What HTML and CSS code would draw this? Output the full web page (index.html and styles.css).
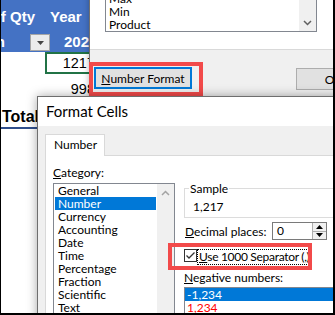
FILE: index.html
```html
<!DOCTYPE html>
<html>
<head>
<meta charset="utf-8">
<link rel="stylesheet" href="styles.css">
</head>
<body>
<div class="frame">
  <div class="sheet">
    <div class="hdr">
      <div class="hrow r1">
        <div class="clip c1"><span>Sum of Qty</span></div>
        <div class="c2">Year</div>
      </div>
      <div class="hrow r2">
        <div class="clip c0"><span>Column</span></div>
        <div class="dd"><svg width="7" height="4" viewBox="0 0 7 4"><polygon points="0,0 7,0 3.5,4" fill="#444"/></svg></div>
        <div class="c3">2020</div>
      </div>
    </div>
    <div class="cell sel"><span>1217</span></div>
    <div class="cell plain"><span>998</span></div>
    <div class="total">Total</div>
  </div>

  <div class="win back">
    <div class="panel">
      <div class="lb">
        <div class="items bottom">
          <div class="it">Max</div>
          <div class="it">Min</div>
          <div class="it">Product</div>
        </div>
        <div class="sbar bottom">
          <div class="arr"><svg width="9" height="6" viewBox="0 0 9 6"><polyline points="1,1 4.5,4.5 8,1" fill="none" stroke="#606060" stroke-width="1.5"/></svg></div>
        </div>
      </div>
    </div>
    <div class="btnrow">
      <div class="btn nf"><span><u>N</u>umber Format</span></div>
      <div class="btn ok">OK</div>
    </div>
  </div>

  <div class="hl hl1"></div>

  <div class="win fmt">
    <div class="title">Format Cells</div>
    <div class="body">
      <div class="tabs"><div class="tab">Number</div></div>
      <div class="tabpanel">
        <div class="lcol">
          <div class="lbl"><u>C</u>ategory:</div>
          <div class="lb cat">
            <div class="items">
              <div class="it">General</div>
              <div class="it on">Number</div>
              <div class="it">Currency</div>
              <div class="it">Accounting</div>
              <div class="it">Date</div>
              <div class="it">Time</div>
              <div class="it">Percentage</div>
              <div class="it">Fraction</div>
              <div class="it">Scientific</div>
              <div class="it">Text</div>
              <div class="it">Special</div>
            </div>
            <div class="sbar">
              <div class="arr"><svg width="9" height="6" viewBox="0 0 9 6"><polyline points="1,5 4.5,1.5 8,5" fill="none" stroke="#a3a3a3" stroke-width="1.5"/></svg></div>
            </div>
          </div>
        </div>
        <div class="rcol">
          <fieldset class="sample">
            <legend>Sample</legend>
            <div class="sval">1,217</div>
          </fieldset>
          <div class="dprow">
            <div class="dplbl"><u>D</u>ecimal places:</div>
            <div class="spin">
              <div class="sv">0</div>
              <div class="sbtns">
                <div class="sb"><svg width="7" height="4" viewBox="0 0 7 4"><polygon points="0,4 7,4 3.5,0" fill="#000"/></svg></div>
                <div class="sb"><svg width="7" height="4" viewBox="0 0 7 4"><polygon points="0,0 7,0 3.5,4" fill="#000"/></svg></div>
              </div>
            </div>
          </div>
          <div class="chkrow">
            <div class="chk"><svg width="11" height="11" viewBox="0 0 11 11"><polyline points="1.5,5.5 4,8 9.5,2.5" fill="none" stroke="#333" stroke-width="1.3"/></svg></div>
            <div class="chklbl"><u>U</u>se 1000 Separator (,)</div>
          </div>
          <div class="lbl neg"><u>N</u>egative numbers:</div>
          <div class="lb negl">
            <div class="nit on">-1,234</div>
            <div class="nit red">1,234</div>
            <div class="nit">(1,234)</div>
          </div>
        </div>
      </div>
    </div>
  </div>

  <div class="hl hl2"></div>
</div>
</body>
</html>
```

FILE: styles.css
```css
* { box-sizing: border-box; }
html, body { margin: 0; padding: 0; }
body {
  width: 335px; height: 315px; overflow: hidden; background: #fff;
  font-family: Lato, "Noto Sans", sans-serif; font-size: 12px; color: #000;
}
u { text-decoration: underline; text-underline-offset: 1px; }
.frame { position: relative; width: 335px; height: 315px; overflow: hidden; background: #fff; }
.frame::after {
  content: ""; position: absolute; left: 0; top: 0; right: 0; bottom: 0;
  border-left: 1px solid #000; border-right: 2px solid #000; border-bottom: 2px solid #000;
  pointer-events: none; z-index: 10;
}

/* spreadsheet */
.sheet { position: absolute; left: 0; top: 0; width: 120px; height: 315px; background: #fff;
  font-family: "Liberation Sans", Arial, sans-serif; }
.hdr { background: #4472c4; color: #fff; font-weight: bold; font-size: 15px; height: 52px; }
.hrow { display: flex; white-space: nowrap; }
.r1 { height: 30px; padding-top: 8px; line-height: 18px; }
.r2 { height: 22px; padding-top: 2px; line-height: 20px; }
.clip { display: flex; justify-content: flex-end; overflow: hidden; flex-shrink: 0; }
.clip span { flex-shrink: 0; }
.c1 { width: 37px; padding-right: 2px; }
.c2 { margin-left: 13px; }
.c0 { width: 5px; }
.dd { margin-left: 25px; margin-top: 2px; width: 20px; height: 17px; background: #ececec;
  border: 1px solid #a6a6a6; display: flex; align-items: center; justify-content: center; flex-shrink: 0; }
.c3 { margin-left: 14px; }
.cell { margin-left: 45px; width: 54px; display: flex; justify-content: flex-end;
  font-size: 14.5px; white-space: nowrap; }
.sel { height: 22px; border: 2px solid #217346; padding-right: 2px; line-height: 18px; }
.plain { height: 26px; padding-top: 6px; padding-right: 4px; line-height: 18px; }
.total { margin-top: 7px; width: 120px; font-weight: bold; font-size: 16px; line-height: 19px;
  padding: 0 0 1px 2px; border-bottom: 2px solid #2f4e8c; white-space: nowrap; }

/* windows */
.win { position: absolute; }
.back { left: 89px; top: -10px; width: 270px; height: 120px; background: #f0f0f0;
  border-left: 1px solid #707070; box-shadow: 0 0 6px rgba(0,0,0,.3); }
.back .panel { height: 60px; background: #fff; border-bottom: 1px solid #d9d9d9; padding-left: 15px; }
.lb { background: #fff; border: 1px solid #828790; display: flex; overflow: hidden; }
.back .lb { width: 212px; height: 42px; }
.items { flex: 1; display: flex; flex-direction: column; overflow: hidden; }
.bottom { justify-content: flex-end; }
.it { line-height: 13px; height: 13px; padding-left: 3px; white-space: nowrap; }
.it.on { background: #0078d7; color: #fff; }
.sbar { width: 17px; background: #f0f0f0; display: flex; flex-direction: column; flex-shrink: 0; }
.arr { width: 17px; height: 17px; display: flex; align-items: center; justify-content: center; }
.btnrow { display: flex; align-items: flex-start; padding: 17px 0 0 4px; }
.btn { height: 22px; background: #e1e1e1; border: 1px solid #adadad; display: flex;
  align-items: center; justify-content: center; white-space: nowrap; flex-shrink: 0; }
.nf { width: 98px; border: 2px solid #0078d7; }
.ok { width: 75px; margin-left: 104px; margin-top: 1px; }

.hl { position: absolute; border: 4px solid #f24a4a; }
.hl1 { left: 89px; top: 62px; width: 114px; height: 34px; }
.hl2 { left: 168px; top: 243px; width: 144px; height: 27px; }

.fmt { left: 37px; top: 96px; width: 320px; height: 240px; border: 1px solid #6e6e6e;
  background: #f0f0f0; box-shadow: 0 0 10px rgba(0,0,0,.35); }
.title { height: 29px; background: #fff; line-height: 29px; padding-left: 8px; font-size: 15px; }
.body { padding: 8px 0 0 7px; }
.tabs { display: flex; }
.tab { position: relative; z-index: 1; width: 60px; height: 22px; margin-bottom: -1px; background: #fff;
  border: 1px solid #d9d9d9; border-bottom: none; line-height: 20px; padding-left: 8px; }
.tabpanel { background: #fff; border-top: 1px solid #d9d9d9; border-left: 1px solid #d9d9d9;
  height: 200px; padding: 9px 0 0 7px; display: flex; gap: 9px; }
.lcol { width: 122px; flex-shrink: 0; }
.lbl { line-height: 15px; white-space: nowrap; }
.cat { margin-top: 3px; height: 150px; }
.cat .items { padding: 0 1px; }
.rcol { width: 170px; flex-shrink: 0; }
.sample { margin: 16px 0 0 0; padding: 0 4px 3px 4px; border: 1px solid #dcdcdc; min-width: 0; }
.sample legend { padding: 0 1px; line-height: 15px; }
.sval { margin-top: 3px; padding-left: 4px; line-height: 15px; }
.dprow { display: flex; align-items: center; height: 18px; margin-top: 4px; }
.dplbl { width: 88px; padding-left: 1px; line-height: 15px; white-space: nowrap; }
.spin { width: 55px; height: 18px; border: 1px solid #7a7a7a; background: #fff; display: flex; }
.sv { flex: 1; padding-left: 4px; line-height: 16px; }
.sbtns { width: 14px; display: flex; flex-direction: column; border-left: 1px solid #adadad; }
.sb { flex: 1; display: flex; align-items: center; justify-content: center; background: #f0f0f0; }
.sb + .sb { border-top: 1px solid #adadad; }
.chkrow { display: flex; align-items: flex-start; margin-top: 9px; }
.chk { width: 13px; height: 13px; border: 1px solid #333; background: #fff; display: flex;
  align-items: center; justify-content: center; flex-shrink: 0; }
.chklbl { margin-left: 0; width: 112px; height: 16px; border: 1px dotted #000; padding: 0 1px;
  line-height: 13px; white-space: nowrap; overflow: hidden; letter-spacing: -0.3px; }
.neg { margin-top: 5px; }
.negl { margin-top: 2px; flex-direction: column; height: 60px; }
.nit { line-height: 13px; height: 13px; padding-left: 2px; white-space: nowrap; }
.nit.on { background: #0078d7; color: #fff; }
.nit.red { color: #ff0000; }
```
